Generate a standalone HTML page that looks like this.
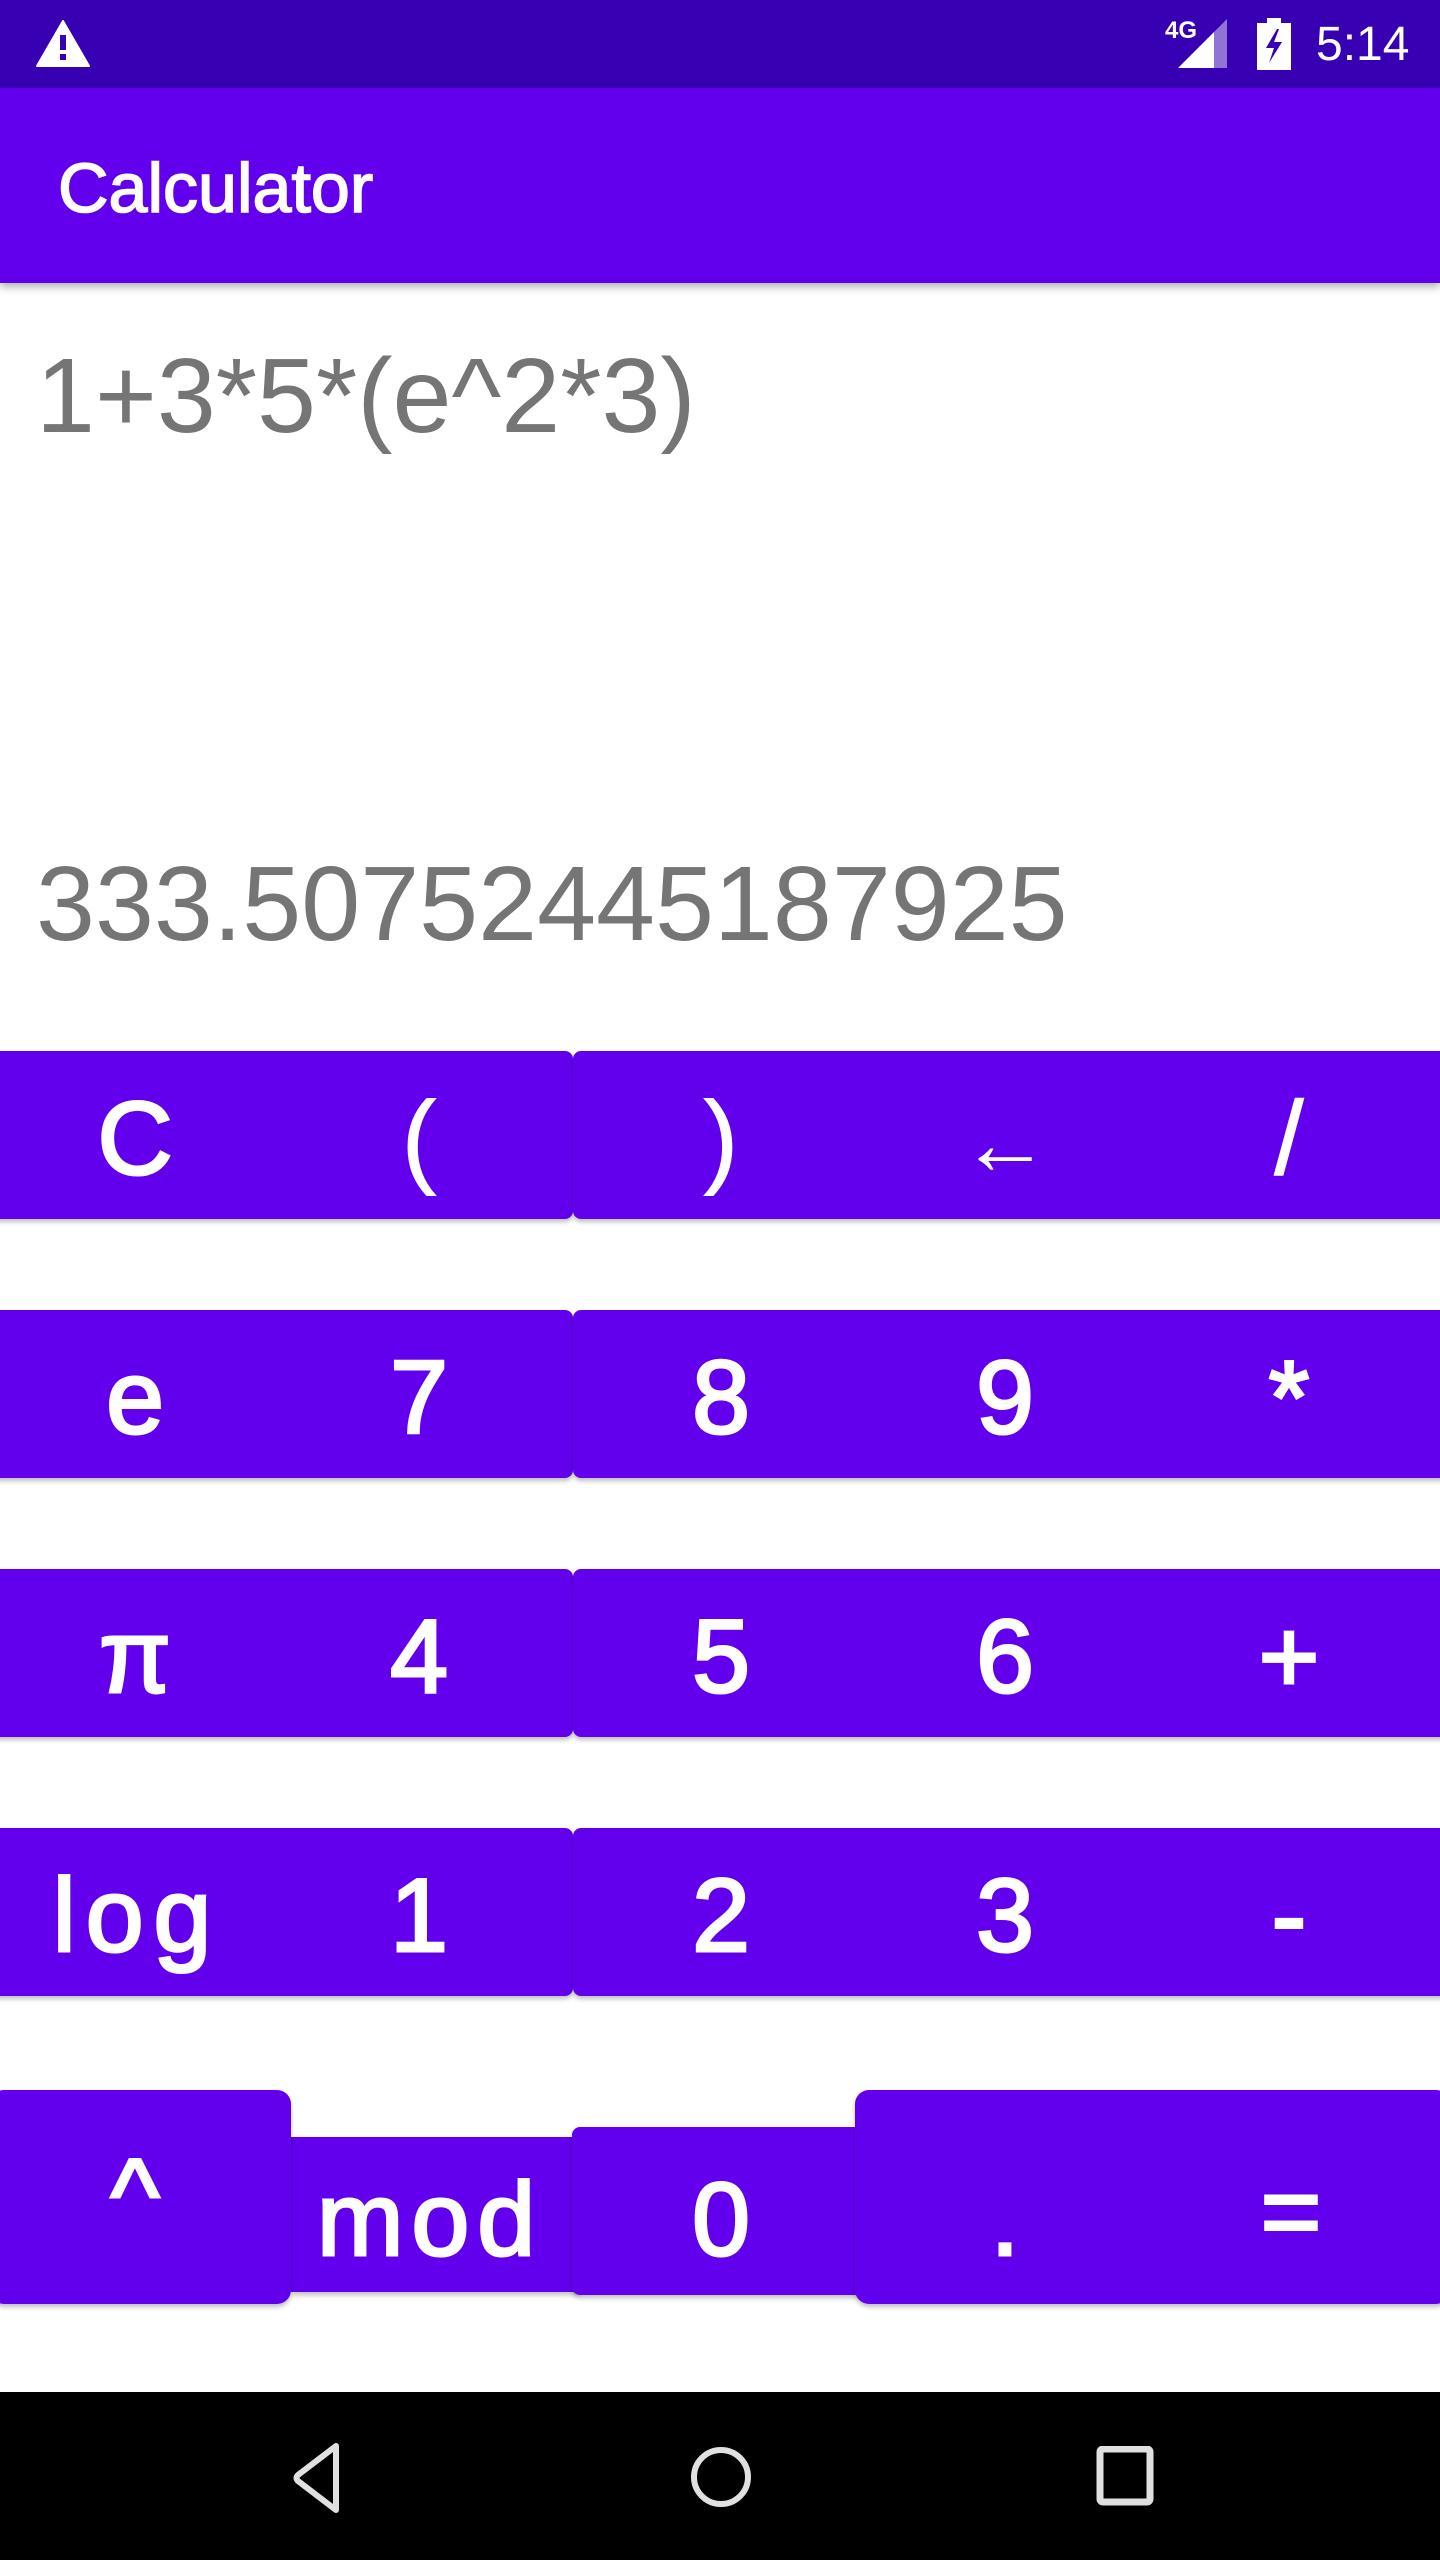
<!DOCTYPE html>
<html><head><meta charset="utf-8"><style>
*{margin:0;padding:0;box-sizing:border-box}
body{width:1440px;height:2560px;position:relative;overflow:hidden;background:#fff;font-family:"Liberation Sans",sans-serif}
.abs{position:absolute}
.sb{left:0;top:0;width:1440px;height:88px;background:#3700B3}
.ab{left:0;top:88px;width:1440px;height:195px;background:#6200EE;box-shadow:0 4px 8px rgba(0,0,0,.3)}
.title{left:58px;top:148px;font-size:70px;line-height:80px;color:#fff;-webkit-text-stroke:1.6px #fff}
.disp{left:36px;font-size:106px;line-height:120px;color:#757575}
.btn{position:absolute;background:#6200EE;border-radius:8px;box-shadow:0 3px 5px rgba(0,0,0,.25)}
.t{position:absolute;color:#fff;font-size:104px;line-height:168px;text-align:center;width:200px;-webkit-text-stroke:3px #fff;letter-spacing:4px}
.nav{left:0;top:2392px;width:1440px;height:168px;background:#000}
</style></head><body>
<div class="abs sb"></div>
<svg class="abs" style="left:36px;top:20px" width="54" height="47" viewBox="0 0 54 47"><path d="M27 1 L53 46 L1 46 Z" fill="#fff" stroke="#fff" stroke-linejoin="round" stroke-width="2"/><rect x="24" y="15" width="6" height="15" fill="#3700B3"/><rect x="24" y="34" width="6" height="6" fill="#3700B3"/></svg>
<div class="abs" style="left:1165px;top:18px;font-size:24px;font-weight:bold;color:#fff;line-height:26px">4G</div>
<svg class="abs" style="left:1178px;top:19px" width="50" height="50"><path d="M0 49 L36 13 L36 49 Z" fill="#fff"/><path d="M36 13 L49 0 L49 49 L36 49 Z" fill="#fff" opacity=".45"/></svg>
<svg class="abs" style="left:1257px;top:18px" width="34" height="52"><rect x="10" y="0" width="14" height="5" fill="#fff"/><rect x="0" y="5" width="34" height="47" fill="#fff"/><path d="M20 11 L9 30 L17 30 L12 45 L25 24 L17 24 L22 11 Z" fill="#3700B3"/></svg>
<div class="abs" style="left:1316px;top:18px;font-size:48px;line-height:54px;color:#fff">5:14</div>
<div class="abs ab"></div>
<div class="abs title">Calculator</div>
<div class="abs disp" style="top:336px">1+3*5*(e^2*3)</div>
<div class="abs disp" style="top:844px">333.50752445187925</div>

<div class="btn" style="left:-10px;top:1051px;width:583px;height:168px"></div>
<div class="btn" style="left:573px;top:1051px;width:877px;height:168px"></div>
<div class="btn" style="left:-10px;top:1310px;width:583px;height:168px"></div>
<div class="btn" style="left:573px;top:1310px;width:877px;height:168px"></div>
<div class="btn" style="left:-10px;top:1569px;width:583px;height:168px"></div>
<div class="btn" style="left:573px;top:1569px;width:877px;height:168px"></div>
<div class="btn" style="left:-10px;top:1828px;width:583px;height:168px"></div>
<div class="btn" style="left:573px;top:1828px;width:877px;height:168px"></div>

<div class="t" style="left:37px;top:1055px">C</div>
<div class="t" style="left:321px;top:1055px;-webkit-text-stroke:1px #fff">(</div>
<div class="t" style="left:623px;top:1055px;-webkit-text-stroke:1px #fff">)</div>
<div class="t" style="left:907px;top:1060px;font-size:90px;-webkit-text-stroke:0">←</div>
<div class="t" style="left:1191px;top:1055px;-webkit-text-stroke:1.5px #fff">/</div>

<div class="t" style="left:37px;top:1314px">e</div>
<div class="t" style="left:321px;top:1314px">7</div>
<div class="t" style="left:623px;top:1314px">8</div>
<div class="t" style="left:907px;top:1314px">9</div>
<div class="t" style="left:1191px;top:1314px">*</div>

<div class="t" style="left:37px;top:1573px">π</div>
<div class="t" style="left:321px;top:1573px">4</div>
<div class="t" style="left:623px;top:1573px">5</div>
<div class="t" style="left:907px;top:1573px">6</div>
<div class="t" style="left:1191px;top:1573px">+</div>

<div class="t" style="left:-13px;top:1832px;width:300px;letter-spacing:10px">log</div>
<div class="t" style="left:321px;top:1832px">1</div>
<div class="t" style="left:623px;top:1832px">2</div>
<div class="t" style="left:907px;top:1832px">3</div>
<div class="t" style="left:1191px;top:1832px">-</div>

<div class="btn" style="left:291px;top:2137px;width:290px;height:155px;border-radius:0"></div>
<div class="btn" style="left:572px;top:2127px;width:290px;height:168px"></div>
<div class="btn" style="left:-10px;top:2090px;width:301px;height:214px;border-radius:14px"></div>
<div class="btn" style="left:855px;top:2090px;width:595px;height:214px;border-radius:14px"></div>
<div class="t" style="left:37px;top:2112px;font-size:104px;-webkit-text-stroke:3px #fff">^</div>
<div class="t" style="left:280px;top:2136px;width:300px;letter-spacing:8px">mod</div>
<div class="t" style="left:623px;top:2136px">0</div>
<div class="t" style="left:907px;top:2136px">.</div>
<div class="t" style="left:1193px;top:2128px">=</div>

<div class="abs nav"></div>
<svg class="abs" style="left:276px;top:2440px" width="80" height="76"><path d="M60 6 L60 70 L22 41 Q19 38 22 35 Z" fill="none" stroke="#e0e0e0" stroke-width="6" stroke-linejoin="round"/></svg>
<svg class="abs" style="left:686px;top:2444px" width="70" height="70"><circle cx="35" cy="33" r="27" fill="none" stroke="#e0e0e0" stroke-width="6"/></svg>
<svg class="abs" style="left:1096px;top:2446px" width="60" height="62"><rect x="4" y="3" width="50" height="53" rx="3" fill="none" stroke="#e0e0e0" stroke-width="7"/></svg>
</body></html>
